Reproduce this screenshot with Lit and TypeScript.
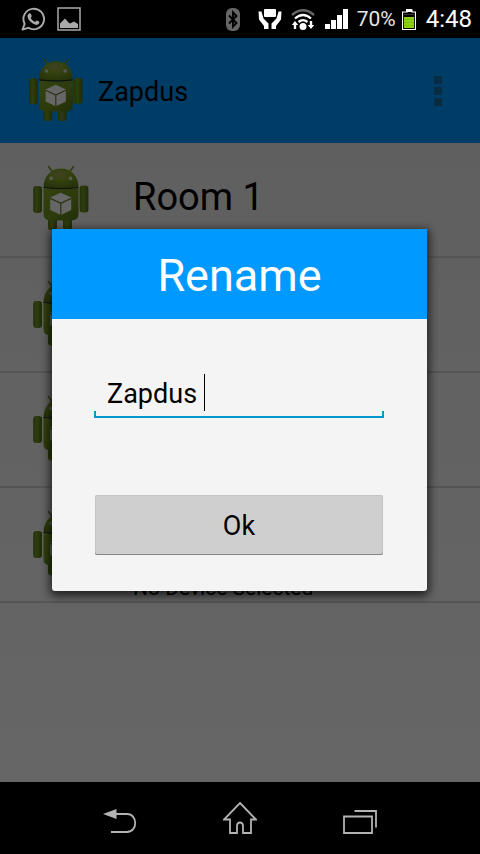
import { LitElement, html, css, svg } from "lit";
import { customElement, state } from "lit/decorators.js";

@customElement("robot-icon")
class RobotIcon extends LitElement {
  static styles = css`
    :host { display: block; flex: none; }
    svg { display: block; width: 100%; height: auto; }
  `;
  render() {
    return html`<svg viewBox="0 0 56 66" aria-hidden="true">
      <defs>
        <linearGradient id="skin" x1="0" y1="0" x2="1" y2="1">
          <stop offset="0" stop-color="#83a828" />
          <stop offset="0.6" stop-color="#6f9120" />
          <stop offset="1" stop-color="#55731a" />
        </linearGradient>
        <linearGradient id="limb" x1="0" y1="0" x2="1" y2="0">
          <stop offset="0" stop-color="#5c7b1a" />
          <stop offset="0.4" stop-color="#769826" />
          <stop offset="1" stop-color="#4f6c16" />
        </linearGradient>
        <radialGradient id="dome" cx="0.45" cy="0.3" r="0.75">
          <stop offset="0" stop-color="#a0a455" />
          <stop offset="0.4" stop-color="#82a528" />
          <stop offset="1" stop-color="#5d7e1a" />
        </radialGradient>
      </defs>
      <path d="M15.5 1.5L19.5 7M40.5 1.5L36.5 7" stroke="#739326" stroke-width="1.6" stroke-linecap="round" />
      <rect x="15" y="48" width="9" height="17.5" rx="3.5" fill="url(#limb)" />
      <rect x="30" y="48" width="9" height="17.5" rx="3.5" fill="url(#limb)" />
      <rect x="0.2" y="21" width="8.800" height="27" rx="3" fill="url(#limb)" />
      <rect x="46.600" y="20.500" width="8.800" height="27" rx="3" fill="url(#limb)" />
      <path d="M10.5 22.500C10.5 11 18 3.500 28 3.500S45.500 11 45.500 22.500Q28 24.500 10.500 22.500Z" fill="url(#dome)" />
      <path d="M10.500 23.500Q28 25 45.500 23.500V49Q45.500 55.500 38 55.500H18Q10.500 55.500 10.500 49Z" fill="url(#skin)" />
      <path d="M10.500 22.700Q28 24.500 45.500 22.700" fill="none" stroke="#26330c" stroke-width="1.300" />
      <circle cx="18.200" cy="13.400" r="1.800" fill="#ddd" />
      <circle cx="37.500" cy="13.400" r="1.800" fill="#ddd" />
      <path d="M27.800 27.700L38.200 32.600V45L27.800 50L17.200 45V32.600Z" fill="#fff" />
      <path d="M17.200 33.400L27.800 38.400L38.200 33.400M27.800 38.400V50" fill="none" stroke="#64802a" stroke-width="1.200" />
    </svg>`;
  }
}

const glyphs = {
  chat: svg`<path d="M1.500 22.500L3.700 16.900A10.300 10.300 0 1 1 7.400 20.800Z" fill="none" stroke="#aaa" stroke-width="1.900" stroke-linejoin="round"/><path d="M8 6.500c.8-.5 1.500-.3 1.800.3l1 2.300c.1.600-1.100 1.300-1 1.800 1 1.900 2.200 3 4.200 3.900.6.100 1.200-1.500 1.800-1.400l2.300 1.200c.8.500-.3 2.900-1.800 3.200-2.800.600-9.900-4.300-9.800-8.800 0-1.100.7-2.100 1.500-2.500z" fill="#aaa"/>`,
  picture: svg`<rect x="1" y="1" width="22" height="22" fill="none" stroke="#aaa" stroke-width="1.500"/><path d="M3 21V16.500L8 11.500L11.500 15.500L13 16.500L17 14.500L21 17V21Z" fill="#aaa"/>`,
  bluetooth: svg`<rect x="0" y="0" width="14" height="23" rx="6" fill="#666"/><path d="M3 7.500L10.500 15L7 18.700V4.300L10.500 8L3 15.500" fill="none" stroke="#000" stroke-width="1.900"/>`,
  hands: svg`<rect x="6" y="0" width="12" height="8" rx="1" fill="#fff"/><path d="M.5 2.500H3.500L5.500 9.500L10.500 14.500V20H6V17L1 10.500ZM23.500 2.500H20.500L18.500 9.500L13.500 14.500V20H18V17L23 10.500Z" fill="#fff"/>`,
  wifi: svg`<path d="M1 6Q12-3.500 23 6" fill="none" stroke="#666" stroke-width="2.400"/><path d="M4 9.500Q12 2.500 20 9.500M7.500 13Q12 9.300 16.500 13" fill="none" stroke="#fff" stroke-width="2.300"/><circle cx="12" cy="17.500" r="3.500" fill="#fff"/><path d="M4 12L7.200 16H5.200V20H2.800V16H.8ZM20 20L16.800 16H18.800V12H21.200V16H23.200Z" fill="#fff"/>`,
  signal: svg`<path d="M0 15H5V20H0ZM6 11H11V20H6ZM12 6H17V20H12ZM18 0H23V20H18Z" fill="#fff"/>`,
  battery: svg`<path d="M5 1H10V3H13.500V20.500H.5V3H5Z" fill="none" stroke="#fff" stroke-width="1.200"/><rect x="4" y="0" width="6" height="3" fill="#fff"/><rect x="2" y="8" width="10" height="11" fill="#8ed016"/><path d="M2 10.500H12M2 13.500H12M2 16.500H12" stroke="#7cbf10"/><path d="M2 5.500H12" stroke="#333"/>`,
  back: svg`<path d="M13 6H24C35 6 35 24 24 24H8" fill="none" stroke="#b3b3b3" stroke-width="1.800"/><path d="M0 6L13.500 1V11Z" fill="#b3b3b3"/>`,
  home: svg`<path d="M17 1L33 17.500H28V31H20V23.500Q19.500 20.500 17 20.500T14 23.500V31H7V17.500H1Z" fill="none" stroke="#b3b3b3" stroke-width="1.800"/>`,
  recent: svg`<path d="M1 6.500H29V23H1ZM11.500 1H33V17.500" fill="none" stroke="#b3b3b3" stroke-width="1.800"/>`,
};

function icon(name: keyof typeof glyphs, width: number, height: number) {
  return html`<svg class="icon" width=${width} height=${height} viewBox="0 0 ${width} ${height}" aria-hidden="true">${glyphs[name]}</svg>`;
}

interface Room {
  name?: string;
  device?: string;
}

@customElement("app-root")
class AppRoot extends LitElement {
  static styles = css`
    :host {
      display: flex;
      flex-direction: column;
      min-height: 100vh;
      background: #000;
      color: #000;
      font-family: Roboto, "Noto Sans", sans-serif;
    }
    * { box-sizing: border-box; }
    h1, h2, p, ul { margin: 0; padding: 0; font-weight: 400; }
    button { font: inherit; color: inherit; border: 0; padding: 0; background: none; }
    .icon { display: block; flex: none; }

    .status {
      display: flex;
      justify-content: space-between;
      align-items: center;
      height: 38px;
      padding: 0 8px 0 21px;
      color: #fff;
      font-size: 21px;
    }
    .group { display: flex; align-items: center; gap: 12px; }
    .readings { display: flex; align-items: center; gap: 10px; }
    .signals { display: flex; align-items: center; gap: 17px; }
    .radios { display: flex; align-items: center; gap: 9px; }
    .power { display: flex; align-items: center; gap: 6px; }
    .level { display: flex; align-items: center; gap: 8px; }
    .percent { color: #e6e6e6; }
    .clock { font-size: 24px; }

    .screen {
      position: relative;
      flex: 1;
      background: linear-gradient(#ebebeb, #fff);
    }
    .bar {
      display: flex;
      align-items: center;
      gap: 15px;
      height: 105px;
      padding: 0 38px 0 29px;
      background: #0099ff;
    }
    .app-icon { width: 54px; padding-bottom: 2px; }
    .app-name { flex: 1; padding-top: 2px; font-size: 27px; line-height: 32px; }
    .more { display: grid; gap: 3px; }
    .dot { width: 8px; height: 8px; background: #146eaa; }

    .rooms { list-style: none; }
    .room {
      display: flex;
      align-items: flex-start;
      gap: 44px;
      height: 115px;
      padding: 22px 33px 0;
      border-bottom: 2px solid #d4d4d4;
    }
    .room-icon { width: 56px; }
    .room-text { display: grid; grid-template-rows: 52px 24px; gap: 8px; padding-top: 6px; }
    .room-name { font-size: 38px; line-height: 52px; }
    .device { grid-row: 2; font-size: 21px; line-height: 24px; }

    .scrim {
      position: absolute;
      inset: 0;
      display: flex;
      align-items: center;
      padding: 0 53px 0 52px;
      background: rgba(0, 0, 0, 0.6);
    }
    .dialog {
      flex: 1;
      min-width: 0;
      background: #f4f4f4;
      border-radius: 0 0 3px 3px;
      box-shadow: 0 3px 10px 2px rgba(0, 0, 0, 0.7);
    }
    .dialog-title {
      padding-top: 4px;
      background: #0099ff;
      color: #fff;
      font-size: 45px;
      line-height: 86px;
      text-align: center;
    }
    .form { display: grid; gap: 77px; padding: 51px 43px 36px 42px; }
    .field {
      display: flex;
      align-items: flex-start;
      height: 48px;
      padding: 4px 13px 0;
      background:
        linear-gradient(#0099cc, #0099cc) bottom / 100% 2px no-repeat,
        linear-gradient(#0099cc, #0099cc) left bottom / 2px 7px no-repeat,
        linear-gradient(#0099cc, #0099cc) right bottom / 2px 7px no-repeat;
    }
    .name-input {
      field-sizing: content;
      max-width: 100%;
      height: 40px;
      margin: 0;
      padding: 0;
      border: 0;
      outline: 0;
      background: none;
      color: #000;
      caret-color: transparent;
      font: inherit;
      font-size: 27px;
    }
    .caret { width: 1px; height: 37px; background: #000; }
    .ok {
      height: 60px;
      margin: 0 1px;
      padding-top: 2px;
      border-radius: 2px;
      background: #cfcfcf;
      box-shadow: inset 0 -1px #858585, inset 0 0 0 1px #c4c4c4;
      font-size: 27px;
    }

    .nav {
      display: flex;
      height: 72px;
      padding: 0 60px;
    }
    .nav-button {
      flex: 1;
      display: flex;
      justify-content: center;
      align-items: flex-end;
      padding-bottom: 20px;
    }
  `;

  @state() private name = "Zapdus ";

  private rooms: Room[] = [{ name: "Room 1" }, {}, {}, { device: "No Device Selected" }];

  render() {
    return html`
      <header class="status">
        <div class="group">${icon("chat", 24, 24)}${icon("picture", 24, 24)}</div>
        <div class="readings">
          <div class="signals">
            ${icon("bluetooth", 15, 23)}
            <div class="radios">${icon("hands", 24, 20)}${icon("wifi", 24, 21)}</div>
          </div>
          <div class="level">
            ${icon("signal", 24, 20)}
            <div class="power">
              <span class="percent">70%</span>
              ${icon("battery", 14, 21)}
            </div>
          </div>
          <span class="clock">4:48</span>
        </div>
      </header>
      <main class="screen">
        <div class="bar">
          <robot-icon class="app-icon"></robot-icon>
          <h1 class="app-name">Zapdus</h1>
          <button class="more" aria-label="More options">
            <span class="dot"></span><span class="dot"></span><span class="dot"></span>
          </button>
        </div>
        <ul class="rooms">
          ${this.rooms.map(
            (room) => html`<li class="room">
              <robot-icon class="room-icon"></robot-icon>
              <div class="room-text">
                ${room.name ? html`<p class="room-name">${room.name}</p>` : null}
                ${room.device ? html`<p class="device">${room.device}</p>` : null}
              </div>
            </li>`
          )}
        </ul>
        <div class="scrim">
          <section class="dialog" role="dialog" aria-labelledby="title">
            <h2 class="dialog-title" id="title">Rename</h2>
            <form class="form" @submit=${(e: Event) => e.preventDefault()}>
              <label class="field">
                <input
                  class="name-input"
                  type="text"
                  aria-label="Name"
                  .value=${this.name}
                  @input=${(e: Event) => (this.name = (e.target as HTMLInputElement).value)}
                />
                <span class="caret"></span>
              </label>
              <button class="ok" type="submit">Ok</button>
            </form>
          </section>
        </div>
      </main>
      <nav class="nav">
        <button class="nav-button" aria-label="Back">${icon("back", 34, 26)}</button>
        <button class="nav-button" aria-label="Home">${icon("home", 34, 32)}</button>
        <button class="nav-button" aria-label="Recent apps">${icon("recent", 34, 24)}</button>
      </nav>
    `;
  }
}
